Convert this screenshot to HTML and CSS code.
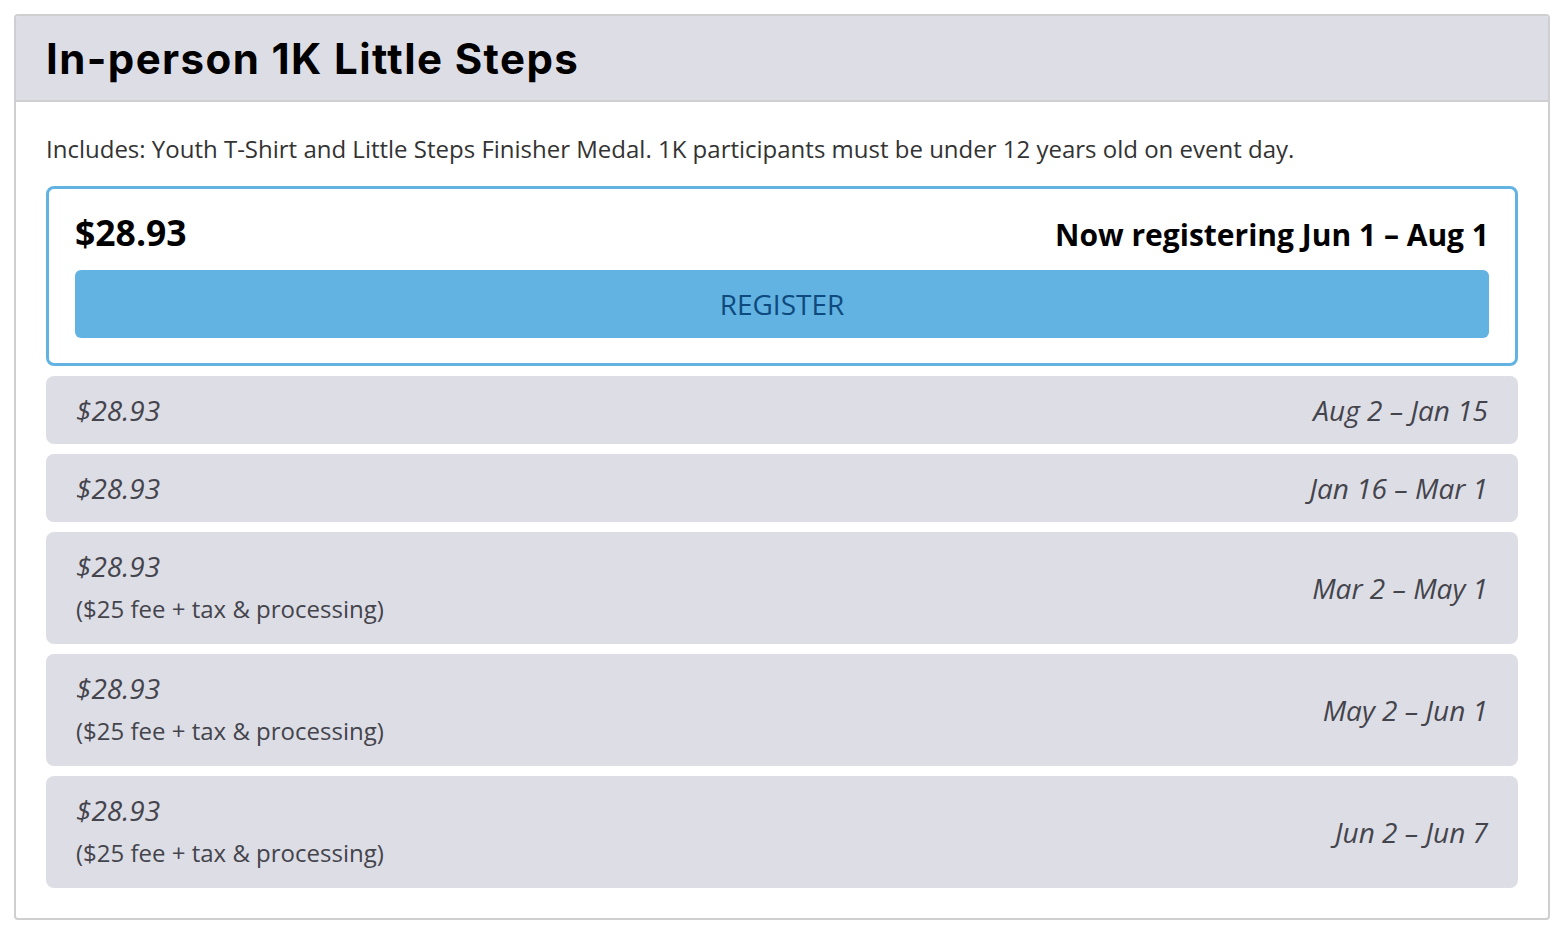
FILE: index.html
```html
<!DOCTYPE html>
<html lang="en">
<head>
<meta charset="UTF-8" />
<meta name="viewport" content="width=device-width, initial-scale=1" />
<title>In-person 1K Little Steps</title>
<link rel="stylesheet" href="styles.css">
</head>
<body>
<div class="race-card">
  <div class="race-header">
    <h1>In-person 1K Little Steps</h1>
  </div>
  <div class="race-body">
    <p class="includes">Includes: Youth T-Shirt and Little Steps Finisher Medal. 1K participants must be under 12 years old on event day.</p>

    <div class="price-current">
      <div class="price-top">
        <span class="price-amount">$28.93</span>
        <span class="price-window">Now registering Jun 1 – Aug 1</span>
      </div>
      <button class="register-btn" type="button">REGISTER</button>
    </div>

    <div class="price-row">
      <div class="price-info">
        <span class="price-future">$28.93</span>
      </div>
      <span class="price-dates">Aug 2 – Jan 15</span>
    </div>
    <div class="price-row">
      <div class="price-info">
        <span class="price-future">$28.93</span>
      </div>
      <span class="price-dates">Jan 16 – Mar 1</span>
    </div>
    <div class="price-row">
      <div class="price-info">
        <span class="price-future">$28.93</span>
        <span class="price-note">($25 fee + tax &amp; processing)</span>
      </div>
      <span class="price-dates">Mar 2 – May 1</span>
    </div>
    <div class="price-row">
      <div class="price-info">
        <span class="price-future">$28.93</span>
        <span class="price-note">($25 fee + tax &amp; processing)</span>
      </div>
      <span class="price-dates">May 2 – Jun 1</span>
    </div>
    <div class="price-row">
      <div class="price-info">
        <span class="price-future">$28.93</span>
        <span class="price-note">($25 fee + tax &amp; processing)</span>
      </div>
      <span class="price-dates">Jun 2 – Jun 7</span>
    </div>
  </div>
</div>
</body>
</html>
```

FILE: styles.css
```css
body {
  margin: 0;
  padding: 14px;
  background: #fff;
  font-family: 'Open Sans', sans-serif;
  color: #333;
}
.race-card {
  width: 1536px;
  box-sizing: border-box;
  border: 2px solid #cfcfd2;
  border-radius: 4px;
  background: #fff;
  overflow: hidden;
}
.race-header {
  background: #dddde5;
  border-bottom: 2px solid #cfcfd2;
  height: 84px;
  padding: 0 30px;
  display: flex;
  align-items: center;
}
.race-header h1 {
  margin: 0;
  font-family: 'Inter', sans-serif;
  font-size: 42px;
  font-weight: 700;
  color: #000;
  letter-spacing: 1.4px;
}
.race-body {
  padding: 30px 30px 30px 30px;
  display: flex;
  flex-direction: column;
  gap: 10px;
}
.includes {
  margin: 0 0 10px;
  font-size: 24px;
  line-height: 34px;
  color: #333;
}
.price-current {
  border: 3px solid #62b3e2;
  border-radius: 8px;
  padding: 21px 26px 25px;
  display: flex;
  flex-direction: column;
  gap: 15px;
}
.price-top {
  display: flex;
  justify-content: space-between;
  align-items: baseline;
  color: #000;
}
.price-amount {
  font-size: 35.5px;
  font-weight: 700;
  line-height: 45px;
}
.price-window {
  font-size: 30px;
  font-weight: 700;
}
.register-btn {
  height: 68px;
  border: none;
  border-radius: 6px;
  background: #62b3e2;
  color: #0e4a7e;
  font-family: 'Open Sans', sans-serif;
  font-size: 28px;
  cursor: pointer;
}
.price-row {
  background: #dddde5;
  border-radius: 8px;
  padding: 13px 30px;
  display: flex;
  justify-content: space-between;
  align-items: center;
  color: #44444c;
}
.price-info {
  display: flex;
  flex-direction: column;
}
.price-future {
  font-size: 28px;
  font-style: italic;
  line-height: 42px;
}
.price-note {
  font-size: 24px;
  line-height: 44px;
}
.price-dates {
  font-size: 28px;
  font-style: italic;
}
```
